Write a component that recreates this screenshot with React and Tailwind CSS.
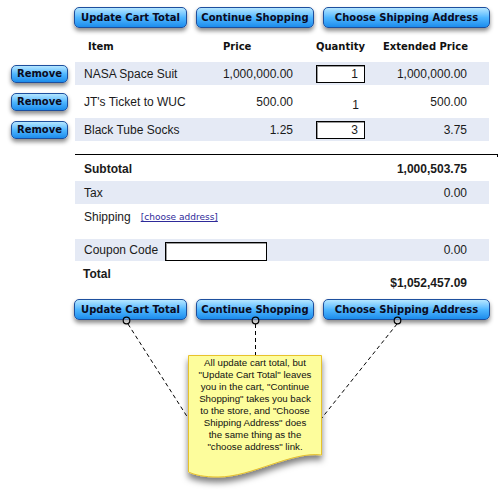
const btn =
  "h-[21px] rounded-[5px] border border-[#1d4f9e] bg-gradient-to-b from-[#b4e6ff] via-[#4fb7ff] to-[#1a8cec] shadow-[0_3px_4px_rgba(0,0,0,0.45)] font-['DejaVu_Sans',Verdana,sans-serif] font-bold text-[10px] text-[#0b0b1e] flex items-center justify-center whitespace-nowrap";

const removeBtn =
  "w-[57px] h-[18px] rounded-[5px] border border-[#1d4f9e] bg-gradient-to-b from-[#b4e6ff] via-[#4fb7ff] to-[#1a8cec] shadow-[0_3px_4px_rgba(0,0,0,0.45)] font-['DejaVu_Sans',Verdana,sans-serif] font-bold text-[10px] text-[#0b0b1e] flex items-center justify-center";

const cols = "grid grid-cols-[130px_88px_90px_106px] items-center w-[414px] whitespace-nowrap";

function ButtonRow() {
  return (
    <div className="flex gap-[9px] pl-[74px]">
      <div className={btn + " w-[113px]"}>Update Cart Total</div>
      <div className={btn + " w-[118px]"}>Continue Shopping</div>
      <div className={btn + " w-[167px]"}>Choose Shipping Address</div>
    </div>
  );
}

function QtyInput({ value }) {
  return (
    <div className="ml-[23px] w-[49px] h-[18px] border border-black shadow-[inset_1px_1px_0_#9a9a9a] bg-white text-right pr-[6px] leading-[17px]">
      {value}
    </div>
  );
}

const items = [
  { name: "NASA Space Suit", price: "1,000,000.00", qty: "1", input: true, ext: "1,000,000.00", shade: true },
  { name: "JT's Ticket to WUC", price: "500.00", qty: "1", input: false, ext: "500.00", shade: false },
  { name: "Black Tube Socks", price: "1.25", qty: "3", input: true, ext: "3.75", shade: true },
];

export default function App() {
  return (
    <div className="relative w-[499px] h-[498px] overflow-hidden bg-white font-['Liberation_Sans',Arial,sans-serif] text-[12px] leading-[14px] text-[#1a1a1a]">
      <div className="pt-[7px]">
        <ButtonRow />
      </div>

      {/* header */}
      <div className="mt-[8px] ml-[75px] h-[21px] font-['DejaVu_Sans',Verdana,sans-serif] font-bold text-[10px] text-[#111]">
        <div className={cols + " h-full"}>
          <div className="pl-[13px]">Item</div>
          <div className="pl-[18px]">Price</div>
          <div className="pl-[23px]">Quantity</div>
          <div className="text-right pr-[22px]">Extended Price</div>
        </div>
      </div>

      {/* items */}
      <div className="mt-[5px] flex flex-col gap-[5px]">
        {items.map((it) => (
          <div key={it.name} className="flex items-center h-[23px]">
            <div className="w-[75px] pl-[11px]">
              <div className={removeBtn}>Remove</div>
            </div>
            <div className={cols + " h-full " + (it.shade ? "bg-[#e5eaf5]" : "")}>
              <div className="pl-[9px]">{it.name}</div>
              <div className="text-right">{it.price}</div>
              <div>
                {it.input ? (
                  <QtyInput value={it.qty} />
                ) : (
                  <div className="ml-[23px] w-[49px] text-right pr-[6px] mt-[6px]">{it.qty}</div>
                )}
              </div>
              <div className="text-right pr-[22px]">{it.ext}</div>
            </div>
          </div>
        ))}
      </div>

      {/* totals */}
      <div className="mt-[13px] ml-[75px] w-[422px] border-t border-black">
        <div className="w-[414px]">
          <div className="h-[26px] pt-[1px] flex items-center justify-between pl-[9px] pr-[22px] font-bold">
            <span>Subtotal</span>
            <span>1,000,503.75</span>
          </div>
          <div className="h-[23px] flex items-center justify-between pl-[9px] pr-[22px] bg-[#e5eaf5]">
            <span>Tax</span>
            <span>0.00</span>
          </div>
          <div className="h-[26px] mb-[9px] flex items-center pl-[9px] pr-[22px]">
            <span>Shipping</span>
            <a href="#" className="ml-[10px] font-['DejaVu_Sans',Verdana,sans-serif] text-[9px] text-[#2e2a99] underline">
              [choose address]
            </a>
          </div>
          <div className="h-[22px] flex items-center pl-[9px] pr-[22px] bg-[#e5eaf5]">
            <span>Coupon Code</span>
            <div className="ml-[7px] w-[102px] h-[19px] self-end border border-black shadow-[inset_1px_1px_0_#9a9a9a] bg-white"></div>
            <span className="ml-auto">0.00</span>
          </div>
          <div className="h-[31px] flex justify-between pl-[8px] pr-[22px] font-bold">
            <span className="self-start pt-[6px]">Total</span>
            <span className="self-end pb-[2px]">$1,052,457.09</span>
          </div>
        </div>
      </div>

      <div className="mt-[7px]">
        <ButtonRow />
      </div>

      {/* annotation */}
      <svg className="absolute inset-0 pointer-events-none" width="499" height="498" viewBox="0 0 499 498">
        <defs>
          <filter id="noteShadow" x="-20%" y="-20%" width="140%" height="150%">
            <feDropShadow dx="0" dy="5" stdDeviation="3" floodColor="#000" floodOpacity="0.5" />
          </filter>
        </defs>
        <path d="M497.5 154 V157" stroke="#000" strokeWidth="1" />
        <g stroke="#000" strokeWidth="1" strokeDasharray="4 3" fill="none">
          <line x1="128" y1="324" x2="188" y2="418" />
          <line x1="255.5" y1="324" x2="255.5" y2="355" />
          <line x1="397" y1="324" x2="321" y2="419" />
        </g>
        <g stroke="#000" strokeWidth="1.2" fill="#fff" fillOpacity="0.3">
          <circle cx="126.5" cy="320.5" r="3.3" />
          <circle cx="255.5" cy="320.5" r="3.3" />
          <circle cx="397.5" cy="320.5" r="3.3" />
        </g>
        <path
          d="M188.5 355.5 H321.5 V455 C292 451 252 477 218 477 C204 477 195 475 188.5 472 Z"
          fill="#fdfd9c"
          stroke="#e8c22c"
          strokeWidth="1"
          filter="url(#noteShadow)"
        />
      </svg>
      <div className="absolute left-[188px] top-[357px] w-[134px] text-center text-[9.7px] leading-[12px] text-[#111] whitespace-nowrap">
        All update cart total, but<br />
        "Update Cart Total" leaves<br />
        you in the cart, "Continue<br />
        Shopping" takes you back<br />
        to the store, and "Choose<br />
        Shipping Address" does<br />
        the same thing as the<br />
        "choose address" link.
      </div>
    </div>
  );
}
